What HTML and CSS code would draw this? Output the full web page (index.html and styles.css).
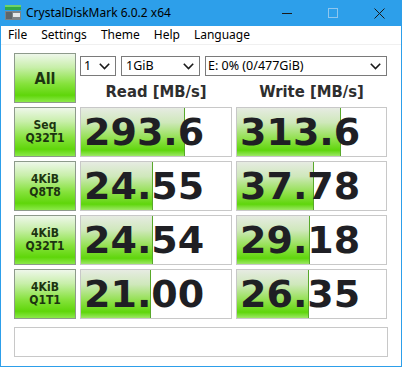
FILE: index.html
```html
<!DOCTYPE html>
<html>
<head>
<meta charset="utf-8">
<title>CrystalDiskMark 6.0.2 x64</title>
<link rel="stylesheet" href="styles.css">
</head>
<body>
<div class="window">
  <div class="titlebar">
    <svg class="app-icon" width="16" height="15" viewBox="0 0 16 15">
      <rect x="0" y="0" width="16" height="5" fill="#2fa84a"/>
      <rect x="0" y="0" width="16" height="2" fill="#6fd26a"/>
      <rect x="0" y="6" width="16" height="9" fill="#7d8489"/>
      <rect x="1" y="7" width="6" height="7" fill="#5f666b"/>
      <rect x="8" y="8" width="7" height="4" fill="#e6e8ea"/>
    </svg>
    <span class="title">CrystalDiskMark 6.0.2 x64</span>
    <div class="controls">
      <span class="ctl"><svg width="10" height="10" viewBox="0 0 10 10"><path d="M0 5.5H10" stroke="#1a1a1a" stroke-width="1"/></svg></span>
      <span class="ctl"><svg width="10" height="10" viewBox="0 0 10 10"><rect x="0.5" y="0.5" width="9" height="9" fill="none" stroke="#8ec6ee" stroke-width="1"/></svg></span>
      <span class="ctl"><svg width="11" height="11" viewBox="0 0 11 11"><path d="M0.5 0.5L10.5 10.5M10.5 0.5L0.5 10.5" stroke="#1a1a1a" stroke-width="1"/></svg></span>
    </div>
  </div>
  <div class="menubar">
    <span class="menu-item">File</span>
    <span class="menu-item">Settings</span>
    <span class="menu-item">Theme</span>
    <span class="menu-item">Help</span>
    <span class="menu-item">Language</span>
  </div>
  <div class="main">
    <div class="grid">
      <div class="btn all">All</div>
      <div class="selects">
        <div class="select s-count"><span>1</span><svg class="chev" width="11" height="7" viewBox="0 0 11 7"><path d="M0.8 0.8L5.5 5.5L10.2 0.8" fill="none" stroke="#1a1a1a" stroke-width="1.6"/></svg></div>
        <div class="select s-size"><span>1GiB</span><svg class="chev" width="11" height="7" viewBox="0 0 11 7"><path d="M0.8 0.8L5.5 5.5L10.2 0.8" fill="none" stroke="#1a1a1a" stroke-width="1.6"/></svg></div>
        <div class="select s-drive"><span>E: 0% (0/477GiB)</span><svg class="chev" width="11" height="7" viewBox="0 0 11 7"><path d="M0.8 0.8L5.5 5.5L10.2 0.8" fill="none" stroke="#1a1a1a" stroke-width="1.6"/></svg></div>
      </div>
      <div class="head">Read [MB/s]</div>
      <div class="head">Write [MB/s]</div>

      <div class="btn label">Seq<br>Q32T1</div>
      <div class="cell" style="--w:69.4%">293.6</div>
      <div class="cell" style="--w:69.9%">313.6</div>

      <div class="btn label">4KiB<br>Q8T8</div>
      <div class="cell" style="--w:47.8%">24.55</div>
      <div class="cell" style="--w:51.5%">37.78</div>

      <div class="btn label">4KiB<br>Q32T1</div>
      <div class="cell" style="--w:47.8%">24.54</div>
      <div class="cell" style="--w:49.3%">29.18</div>

      <div class="btn label">4KiB<br>Q1T1</div>
      <div class="cell" style="--w:46.4%">21.00</div>
      <div class="cell" style="--w:48.4%">26.35</div>
    </div>
    <div class="comment"></div>
  </div>
</div>
</body>
</html>
```

FILE: styles.css
```css
* { box-sizing: border-box; }
html, body { margin: 0; padding: 0; background: #ffffff; }
body { font-family: "Noto Sans", "Open Sans", sans-serif; font-size: 12px; color: #000; }

.window {
  width: 402px;
  height: 367px;
  border: 1px solid #2d9fea;
  border-top: none;
  background: #ffffff;
  display: flex;
  flex-direction: column;
}

.titlebar {
  height: 26px;
  background: #2d9fea;
  display: flex;
  align-items: center;
  margin: 0 -1px;
}
.app-icon { margin-left: 5px; margin-top: -1px; flex: none; }
.title { margin-left: 5px; font-size: 12px; color: #000; line-height: 26px; }
.controls { margin-left: auto; display: flex; height: 26px; }
.ctl { width: 46px; height: 26px; display: flex; align-items: center; justify-content: center; }

.menubar {
  height: 19px;
  display: flex;
  align-items: center;
  border-bottom: 1px solid #f0f0f0;
  padding-left: 0;
}
.menu-item { padding: 0 7px; line-height: 18px; }

.main { padding: 8px 0 0 13px; }

.grid {
  display: grid;
  grid-template-columns: 62px 152px 151px;
  grid-template-rows: 22px 24px repeat(4, 50px);
  column-gap: 4px;
  row-gap: 4px;
}

.btn {
  border: 1px solid #8d9a8b;
  background: linear-gradient(to bottom, #eef7ea 0%, #c8efaa 28%, #86e23c 62%, #5fd60a 86%, #8be94a 100%);
  display: flex;
  align-items: center;
  justify-content: center;
  text-align: center;
  font-family: "DejaVu Sans Condensed", "DejaVu Sans", sans-serif;
  font-weight: bold;
  color: #1c3410;
}
.all { grid-row: 1 / span 2; grid-column: 1; font-size: 16px; padding-top: 1px; }
.label { font-size: 12px; line-height: 13px; }

.selects {
  grid-column: 2 / span 2;
  grid-row: 1;
  display: flex;
  gap: 5px;
  padding-top: 3px;
}
.select {
  height: 20px;
  border: 1px solid #7a7a7a;
  background: #fff;
  display: flex;
  align-items: center;
  padding: 0 5px 0 3px;
  font-size: 12.5px;
}
.select span { flex: 1; line-height: 18px; }
.chev { flex: none; }
.s-count { width: 36px; }
.s-size { width: 79px; padding-left: 4px; }
.s-drive { width: 182px; padding-left: 2px; }

.head {
  grid-row: 2;
  font-family: "DejaVu Sans Condensed", "DejaVu Sans", sans-serif;
  font-weight: bold;
  font-size: 16.5px;
  color: #2e2e2e;
  text-align: center;
  line-height: 24px;
  padding-top: 1px;
}

.cell {
  border: 1px solid #c8c8c8;
  background-color: #ffffff;
  background-image:
    linear-gradient(to right, transparent calc(var(--w) - 1px), #58a82a calc(var(--w) - 1px), #58a82a var(--w), transparent var(--w)),
    linear-gradient(to bottom, #e6ebe2 0%, #cfe8bb 30%, #8fe04a 65%, #5fd60c 88%, #9de866 100%);
  background-size: 100% 100%, var(--w) 100%;
  background-repeat: no-repeat;
  font-family: "DejaVu Sans", sans-serif;
  font-weight: bold;
  font-size: 38px;
  color: #1f1f24;
  line-height: 48px;
  padding-left: 3px;
  letter-spacing: 0;
}

.comment {
  margin-top: 8px;
  width: 374px;
  height: 30px;
  border: 1px solid #c8c8c8;
  background: #fff;
}
```
